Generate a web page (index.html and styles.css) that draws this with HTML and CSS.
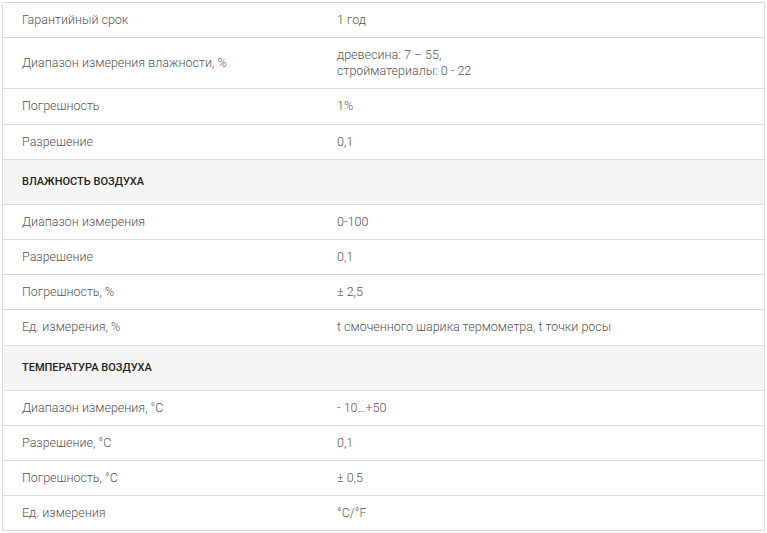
FILE: index.html
```html
<!DOCTYPE html>
<html lang="ru">
<head>
<meta charset="utf-8">
<link rel="stylesheet" href="styles.css">
</head>
<body>
<div class="wrap">
<table class="specs">
  <tbody>
    <tr><td class="name">Гарантийный срок</td><td class="val">1 год</td></tr>
    <tr class="tall"><td class="name">Диапазон измерения влажности, %</td><td class="val">древесина: 7 – 55,<br>стройматериалы: 0 - 22</td></tr>
    <tr><td class="name">Погрешность</td><td class="val">1%</td></tr>
    <tr><td class="name">Разрешение</td><td class="val">0,1</td></tr>
    <tr class="group"><td colspan="2">ВЛАЖНОСТЬ ВОЗДУХА</td></tr>
    <tr><td class="name">Диапазон измерения</td><td class="val">0-100</td></tr>
    <tr><td class="name">Разрешение</td><td class="val">0,1</td></tr>
    <tr><td class="name">Погрешность, %</td><td class="val">± 2,5</td></tr>
    <tr><td class="name">Ед. измерения, %</td><td class="val">t смоченного шарика термометра, t точки росы</td></tr>
    <tr class="group"><td colspan="2">ТЕМПЕРАТУРА ВОЗДУХА</td></tr>
    <tr><td class="name">Диапазон измерения, °C</td><td class="val">- 10…+50</td></tr>
    <tr><td class="name">Разрешение, °C</td><td class="val">0,1</td></tr>
    <tr><td class="name">Погрешность, °C</td><td class="val">± 0,5</td></tr>
    <tr><td class="name">Ед. измерения</td><td class="val">°C/°F</td></tr>
  </tbody>
</table>
</div>
</body>
</html>
```
FILE: styles.css
```css
html, body {
  margin: 0;
  padding: 0;
  background: #fff;
}
.wrap {
  padding: 2px 2px 0 2px;
}
.specs {
  width: 763px;
  border-collapse: collapse;
  font-family: Roboto, "Liberation Sans", sans-serif;
  font-size: 12.5px;
  font-weight: 300;
  line-height: 16px;
  color: #555;
  border: 1px solid #ddd;
}
.specs td {
  border-top: 1px solid #ddd;
  border-bottom: 1px solid #ddd;
  padding: 9.1px 20px 9.1px 20px;
  vertical-align: middle;
  text-align: left;
}
.specs td.name {
  width: 275px;
  padding-left: 19px;
}
.specs td.val {
  padding-left: 20px;
}
.specs tr.group td {
  background: #f5f5f5;
  color: #222;
  font-weight: 500;
  font-size: 11px;
  padding-top: 14px;
  padding-bottom: 14px;
  padding-left: 19px;
}
```
